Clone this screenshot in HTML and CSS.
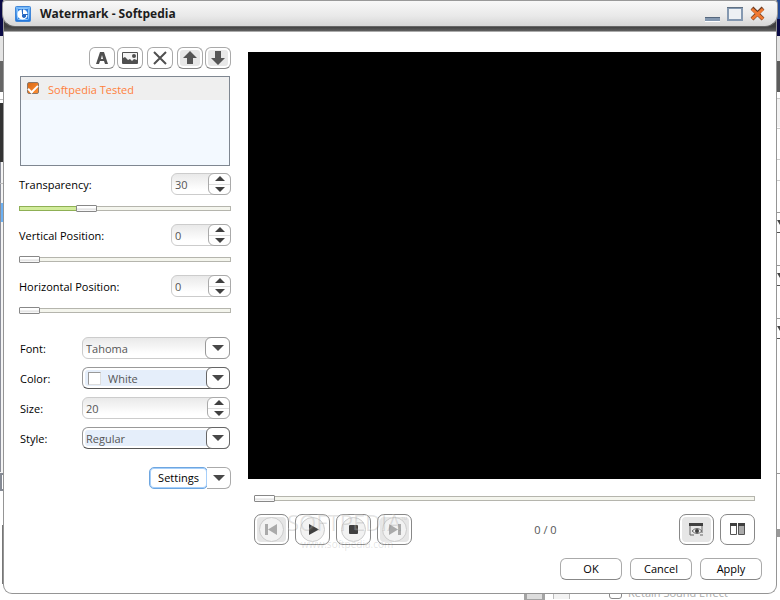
FILE: index.html
```html
<!DOCTYPE html>
<html lang="en">
<head>
<meta charset="utf-8">
<title>Watermark - Softpedia</title>
<link rel="stylesheet" href="styles.css">
</head>
<body>
<div class="backdrop">
  <svg class="edge edge-left" width="4" height="600" aria-hidden="true">
    <rect width="4" height="600" fill="#fff"/>
    <rect width="4" height="36" fill="#0a0a46"/>
    <rect width="4" height="25" y="36" fill="#e4e4e4"/>
    <rect width="4" height="31" y="61" fill="#666"/>
    <rect width="4" height="1" y="99" fill="#bbb"/>
    <rect width="4" height="59" y="103" fill="#333"/>
    <rect width="4" height="438" y="162" fill="#f4f4f4"/>
    <rect width="1" height="310" y="162" fill="#8b8e99"/>
    <rect width="4" height="1" y="183" fill="#bbb"/>
    <rect width="3" height="19" y="203" x="1" fill="#6cb1f4"/>
    <rect width="4" height="18" y="473" fill="#858a94"/>
    <rect width="2" height="14" y="475" x="2" fill="#fff"/>
    <rect width="4" height="109" y="491" fill="#fff"/>
    <rect width="1" height="59" y="525" x="2" fill="#777"/>
  </svg>
  <svg class="edge edge-right" width="3" height="600" aria-hidden="true">
    <rect width="3" height="600" fill="#fff"/>
    <rect width="3" height="19" fill="#234a96"/>
    <rect width="3" height="17" y="19" fill="#0a0a46"/>
    <rect width="3" height="25" y="36" fill="#e4e4e4"/>
    <rect width="3" height="31" y="61" fill="#5c5c5c"/>
    <rect width="3" height="28" y="99" fill="#f3f3f3"/>
    <path d="M0 98.500h3M0 128.500h3M0 159.500h3M0 180.500h3" stroke="#ccc"/>
    <path d="M0 212.500h3M0 265.500h3M0 318.500h3M0 473.500h3" stroke="#999"/>
    <path d="M0 232.500h3M0 285.500h3M0 338.500h3" stroke="#555"/>
    <path d="M0 220h3v5zM0 273h3v5zM0 326h3v5z" fill="#444"/>
    <rect width="3" height="8" y="529" fill="#999"/>
  </svg>
  <div class="under-row">
    <span class="under-button"></span>
    <span class="under-divider"></span>
    <span class="under-check"></span>
    <span>Retain Sound Effect</span>
  </div>
</div>

<div class="dialog">
  <header class="titlebar">
    <svg class="logo" width="16" height="16" viewBox="0 0 16 16" aria-hidden="true">
      <defs><linearGradient id="blue" x2="0" y2="1"><stop stop-color="#7cbcfa"/><stop offset="1" stop-color="#1f74dc"/></linearGradient></defs>
      <rect x=".5" y=".5" width="15" height="15" rx="1" fill="url(#blue)" stroke="#3f86d8"/>
      <rect x="2.500" y="2.500" width="11" height="11" rx="1" fill="#2f80e0" stroke="#8cc6fb"/>
      <path d="M6.500 3.500A5 5 0 1 0 12.500 8.500L8 8.500 7 7z" fill="#fff"/>
      <path d="M8 3.500v4.500h4.500A4.500 4.500 0 0 0 8 3.500z" fill="#fff"/>
      <path d="M7 6v3h4a2 2 0 0 1-4 1.500z" fill="#2467c0"/>
      <path d="M7.500 3v5.500H13" fill="none" stroke="#2467c0"/>
    </svg>
    <h1>Watermark - Softpedia</h1>
    <div class="window-buttons">
      <button class="bare" aria-label="Minimize"><svg width="15" height="16"><path d="M0 11h15v4H0z" fill="#8498b0"/><path d="M0 11.500h15" stroke="#55677d"/><path d="M0 15.500h15" stroke="#fff"/></svg></button>
      <button class="bare" aria-label="Maximize"><svg width="16" height="16"><path d="M1 2h14v12H1z" fill="#eef1f4" stroke="#8498b0" stroke-width="2"/><path d="M0 1.500h16" stroke="#5f7083"/></svg></button>
      <button class="bare" aria-label="Close"><svg width="16" height="16"><path d="M2 2l11 11M13 2L2 13" stroke="#6c3a20" stroke-width="4"/><path d="M2 3l11 10M13 3L2 13" stroke="#f07830" stroke-width="3"/></svg></button>
    </div>
  </header>

  <main class="content">
    <section class="settings">
      <div class="toolbar">
        <div class="tools">
          <button class="tool" aria-label="Add text"><svg width="16" height="16"><path fill-rule="evenodd" d="M6 2h4l4 12h-3l-1-3H6l-1 3H2zM7 9h2L8 5z" fill="#505050"/></svg></button>
          <button class="tool" aria-label="Add picture"><svg width="16" height="16"><path d="M.5 2.500h15v11H.5z" fill="#f4f4f4" stroke="#505050"/><path d="M1 8l2-1 2 2 1 1 2-1 2 2 2-2 3 1v3H1z" fill="#505050"/><circle cx="12" cy="6" r="2" fill="#505050"/></svg></button>
        </div>
        <button class="tool" aria-label="Delete"><svg width="16" height="16"><path d="M2 2l12 12M14 2L2 14" stroke="#505050" stroke-width="2"/></svg></button>
        <div class="tools">
          <button class="tool muted" aria-label="Move up"><svg width="16" height="16"><path d="M8 1l7 7h-4v6H5V8H1z" fill="#555"/></svg></button>
          <button class="tool muted" aria-label="Move down"><svg width="16" height="16"><path d="M8 15l7-7h-4V1H5v7H1z" fill="#555"/></svg></button>
        </div>
      </div>

      <div class="layers">
        <label class="layer"><input type="checkbox" checked>Softpedia Tested</label>
      </div>

      <div class="param">
        <label for="transparency">Transparency:</label>
        <span class="spinner"><input id="transparency" type="text" value="30"><span class="steps"><button class="up" aria-label="Increase"></button><button class="down" aria-label="Decrease"></button></span></span>
      </div>
      <input class="slider" type="range" value="30" aria-label="Transparency" style="--fill:30%">

      <div class="param">
        <label for="vertical">Vertical Position:</label>
        <span class="spinner"><input id="vertical" type="text" value="0"><span class="steps"><button class="up" aria-label="Increase"></button><button class="down" aria-label="Decrease"></button></span></span>
      </div>
      <input class="slider" type="range" value="0" aria-label="Vertical position">

      <div class="param">
        <label for="horizontal">Horizontal Position:</label>
        <span class="spinner"><input id="horizontal" type="text" value="0"><span class="steps"><button class="up" aria-label="Increase"></button><button class="down" aria-label="Decrease"></button></span></span>
      </div>
      <input class="slider" type="range" value="0" aria-label="Horizontal position">

      <div class="form">
        <label for="font">Font:</label>
        <span class="combo"><select id="font"><option>Tahoma</option></select><span class="drop"></span></span>
        <label for="color">Color:</label>
        <span class="combo strong"><select id="color" class="with-swatch"><option>White</option></select><span class="swatch"></span><span class="drop"></span></span>
        <label for="size">Size:</label>
        <span class="spinner"><input id="size" type="text" value="20"><span class="steps"><button class="up" aria-label="Increase"></button><button class="down" aria-label="Decrease"></button></span></span>
        <label for="style">Style:</label>
        <span class="combo strong"><select id="style"><option>Regular</option></select><span class="drop"></span></span>
      </div>

      <div class="split">
        <button class="split-main">Settings</button>
        <button class="split-drop" aria-label="More settings"></button>
      </div>
    </section>

    <section class="preview">
      <div class="video"></div>
      <div class="player">
        <input class="slider" type="range" value="0" aria-label="Seek">
        <div class="controls">
          <button class="control off" aria-label="Previous"><svg width="27" height="27"><circle class="disc" cx="13.500" cy="13.500" r="12"/><path d="M7 8h3v11H7zM19 8v11l-9-5.500z"/></svg></button>
          <button class="control" aria-label="Play"><svg width="27" height="27"><circle class="disc" cx="13.500" cy="13.500" r="12"/><path d="M10 8v11l10-5.500z"/></svg></button>
          <button class="control" aria-label="Stop"><svg width="27" height="27"><circle class="disc" cx="13.500" cy="13.500" r="12"/><rect x="9" y="9" width="9" height="9" rx="1"/></svg></button>
          <button class="control off" aria-label="Next"><svg width="27" height="27"><circle class="disc" cx="13.500" cy="13.500" r="12"/><path d="M17 8h3v11h-3zM8 8v11l9-5.500z"/></svg></button>
          <span class="time">0 / 0</span>
          <button class="control pressed" aria-label="Preview"><svg width="15" height="13"><path d="M1 12V1h12v9" fill="none" stroke="#666"/><path d="M0 0h14v3H0z"/><path d="M3 8q5-5 10 0-5 5-10 0z" fill="#eee" stroke="#666"/><circle cx="8" cy="8" r="2"/><path d="M1 12h4M11 12h3" stroke="#666"/></svg></button>
          <button class="control" aria-label="Compare"><svg width="15" height="13"><path d="M.5 1.500h6v10h-6z" fill="#fff" stroke="#555"/><path d="M8.500 1.500h6v10h-6z" fill="#aaa" stroke="#555"/><path d="M0 0h7v3H0zM8 0h7v3H8z"/></svg></button>
          <div class="stamp"><span class="stamp-name">SOFTPEDIA<sup>™</sup></span><span class="stamp-url">www.softpedia.com</span></div>
        </div>
      </div>
    </section>
  </main>

  <footer class="actions">
    <button class="action">OK</button>
    <button class="action">Cancel</button>
    <button class="action">Apply</button>
  </footer>
</div>
</body>
</html>
```

FILE: styles.css
```css
* { box-sizing: border-box; }

body {
  margin: 0;
  min-height: 100vh;
  padding: 0 3px 6px;
  position: relative;
  display: flex;
  overflow: hidden;
  background: #fff;
  color: #000;
  font: 11px/16px "Open Sans", "Noto Sans", sans-serif;
}

button, input, select { font: inherit; margin: 0; padding: 0; }
svg { display: block; }

/* main application window behind the dialog */
.backdrop { position: absolute; inset: 0; overflow: hidden; }
.edge { position: absolute; top: 0; }
.edge-left { left: 0; }
.edge-right { right: 0; }
.under-row {
  position: absolute;
  right: 52px;
  bottom: -2px;
  display: flex;
  align-items: center;
  height: 18px;
  color: #aaa;
  font-size: 11px;
}
.under-button { width: 21px; height: 11px; border: 3px solid #a4a4a4; background: #ddd; align-self: flex-end; }
.under-divider { width: 17px; height: 12px; margin: 0 39px 0 8px; border: 1px solid #bbb; border-width: 0 1px; background: #f3f3f3; }
.under-check { width: 13px; height: 12px; margin: 0 6px 0 0; border: 1px solid #888; border-radius: 3px; }

.dialog {
  position: relative;
  flex: 1;
  display: flex;
  flex-direction: column;
  border: 1px solid #959595;
  border-top: 0;
  border-radius: 0 0 9px 9px;
  background: #fff;
}

.titlebar {
  display: flex;
  align-items: center;
  gap: 9px;
  height: 27px;
  margin: 0 -2px;
  padding: 0 11px 0 12px;
  border: 1px solid #999;
  border-bottom-color: #666;
  border-radius: 4px 4px 13px 13px;
  background: linear-gradient(#f8f8f8, #e9e9e9 60%, #d6d6d6);
  position: relative;
}
.titlebar h1 {
  flex: 1;
  margin: 0;
  font-size: 12px;
  line-height: 16px;
  font-weight: 700;
  color: #1c1c1c;
}
.window-buttons { display: flex; gap: 7px; }
.bare { border: 0; background: none; }

.content {
  flex: 1;
  display: grid;
  grid-template-columns: 212px 1fr;
  gap: 17px;
  padding: 0 15px;
  position: relative;
}
/* dark strip showing under the rounded title bar */
.dialog::before {
  content: "";
  position: absolute;
  inset: 14px 0 auto;
  height: 17px;
  border-bottom: 1px solid #aaa;
  background: linear-gradient(#404040 75%, #606060);
}

.settings { padding-top: 20px; }
.toolbar, .tools { display: flex; }
.toolbar { justify-content: flex-end; gap: 4px; }
.tools { gap: 2px; }
.tool {
  display: grid;
  place-items: center;
  width: 26px;
  height: 22px;
  border: 1px solid #aaa;
  border-bottom-color: #888;
  border-radius: 6px;
  background: #fff;
}
.muted { background: #e8e8e8; box-shadow: inset 0 0 0 2px #fff; }

.layers {
  height: 90px;
  margin: 7px 1px;
  border: 1px solid #7f8791;
  background: #f3f9ff;
}
.layer {
  display: flex;
  align-items: center;
  gap: 9px;
  height: 23px;
  padding: 2px 6px 0;
  background: #efefef;
  color: #ff7f3c;
}
.layer input {
  appearance: none;
  width: 12px;
  height: 12px;
  margin-bottom: 3px;
  border: 1px solid #8b7768;
  border-radius: 2px;
  background: linear-gradient(135deg, #d96a18, #ff8e31);
  display: grid;
  place-items: center;
}
.layer input:checked::after {
  content: "";
  width: 8px;
  height: 4px;
  border: solid #fff;
  border-width: 0 0 2px 2px;
  transform: rotate(-45deg);
}

.param { display: flex; justify-content: space-between; align-items: center; height: 22px; }
.param label, .form label { padding-top: 2px; }
.param .spinner { width: 60px; }
.spinner {
  display: flex;
  height: 22px;
  border: 1px solid #ccc;
  border-radius: 6px;
  background: linear-gradient(#e9e9e9, #fff 80%);
}
.spinner input {
  flex: 1;
  min-width: 0;
  width: 0;
  padding: 1px 0 0 3px;
  border: 0;
  outline: 0;
  background: none;
  color: #555;
}
.steps {
  display: flex;
  flex-direction: column;
  width: 23px;
  margin: -1px;
  border: 1px solid #aaa;
  border-radius: 6px;
  background: #fff;
}
.steps button { flex: 1; border: 0; background: none; display: grid; place-items: center; }
.steps .down { border-top: 1px solid #ddd; }
.up::after, .down::after, .drop::after, .split-drop::after {
  content: "";
  border: 5px solid transparent;
}
.up::after { border-top: 0; border-bottom-color: #404040; }
.down::after { border-bottom: 0; border-top-color: #404040; }
.drop::after, .split-drop::after {
  border-width: 6px 6px 0;
  border-top-color: #484848;
}

.slider {
  --fill: 0%;
  appearance: none;
  display: block;
  width: 100%;
  height: 7px;
  background: none;
}
.settings .slider { margin: 10px 0 12px; }
.slider::-webkit-slider-runnable-track {
  height: 5px;
  border: 1px solid #c9c9c4;
  border-top-color: #92928b;
  background: linear-gradient(to right, #d2ec9c var(--fill), #f4f5ed var(--fill));
}
.slider[style]::-webkit-slider-runnable-track {
  border-image: linear-gradient(to right, #8fb055 var(--fill), #b5b5ad var(--fill)) 1;
}
.slider::-webkit-slider-thumb {
  appearance: none;
  width: 21px;
  height: 7px;
  margin: -2px -1px 0;
  border: 1px solid #888;
  border-radius: 1px;
  background: linear-gradient(#fff 40%, #ddd 60%, #fff);
}

.form {
  display: grid;
  grid-template-columns: 62px 1fr;
  row-gap: 8px;
  align-items: center;
  margin-top: 23px;
  padding: 0 1px;
}
.combo {
  position: relative;
  display: flex;
  height: 22px;
  border: 1px solid #ccc;
  border-radius: 6px;
  background: linear-gradient(#e9e9e9, #fff 80%);
}
.combo select {
  appearance: none;
  width: 100%;
  padding: 1px 0 0 3px;
  border: 0;
  outline: 0;
  background: none;
  color: #555;
}
.combo .with-swatch { padding-left: 25px; }
.combo.strong {
  border-color: #999;
  border-bottom-color: #555;
  background: #e5eefa;
  box-shadow: inset 0 0 0 2px #fff;
}
.swatch {
  position: absolute;
  left: 5px;
  top: 4px;
  width: 13px;
  height: 13px;
  border: 1px solid #999;
  border-right-color: #ddd;
  border-bottom-color: #ddd;
  background: #fff;
}
.drop {
  position: absolute;
  inset: -1px -1px -1px auto;
  width: 25px;
  display: grid;
  place-items: center;
  border: 1px solid #999;
  border-radius: 6px;
  background: #fff;
  pointer-events: none;
}
.strong .drop { width: 24px; border-color: #666; }

.split { display: flex; justify-content: flex-end; margin-top: 18px; }
.split-main {
  width: 59px;
  height: 22px;
  border: 1px solid #6ea6e0;
  border-radius: 5px;
  background: #fff;
  box-shadow: inset 0 0 0 1px #a6cffa;
}
.split-drop {
  width: 24px;
  height: 22px;
  margin-left: -1px;
  display: grid;
  place-items: center;
  border: 1px solid #aaa;
  border-left: 0;
  border-radius: 0 6px 6px 0;
  background: #fff;
}

.preview { display: flex; flex-direction: column; padding-top: 25px; }
.video { flex: 1; background: #000; }
.player { padding: 16px 6px 0; }
.controls {
  position: relative;
  display: flex;
  align-items: center;
  gap: 6px;
  margin-top: 12px;
}
.control {
  display: grid;
  place-items: center;
  width: 35px;
  height: 31px;
  border: 1px solid #888;
  border-radius: 7px;
  background: #fff;
}
.control svg { fill: #404040; }
.control .disc { fill: #f2f2f2; stroke: #ccc; }
.off, .pressed { background: #e6e6e6; box-shadow: inset 0 0 0 2px #fff; }
.off svg { fill: #aaa; }
.time { flex: 1; text-align: center; color: #555; }

/* translucent stamp over the transport buttons */
.stamp {
  position: absolute;
  left: 32px;
  top: -7px;
  display: flex;
  flex-direction: column;
  align-items: center;
  color: rgba(255, 255, 255, .2);
  text-shadow: 1px 1px 0 rgba(120, 120, 120, .22);
  pointer-events: none;
}
.stamp-name { font-size: 22px; line-height: 28px; }
.stamp-name sup { font-size: 8px; line-height: 8px; }
.stamp-url { font-size: 10px; line-height: 16px; }

.actions {
  display: flex;
  justify-content: flex-end;
  gap: 8px;
  padding: 13px 14px;
  position: relative;
}
.action {
  width: 62px;
  height: 22px;
  border: 1px solid #aaa;
  border-bottom-color: #888;
  border-radius: 6px;
  background: #fff;
  color: #000;
}
```
